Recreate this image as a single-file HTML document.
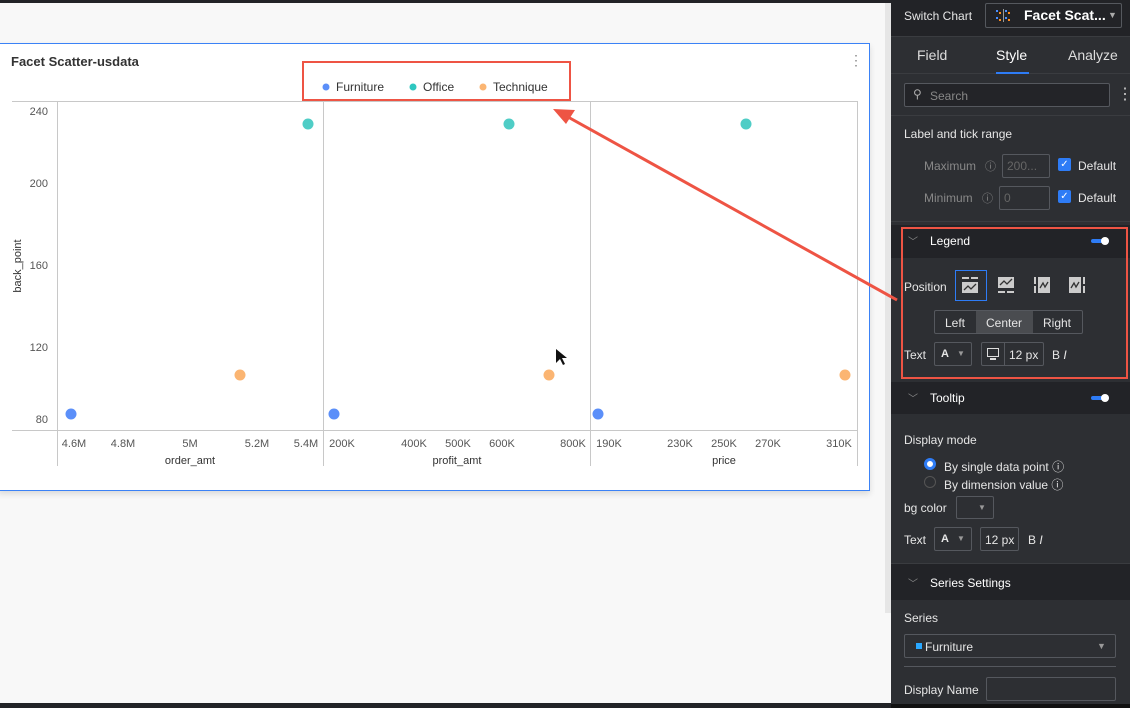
<!DOCTYPE html>
<html><head><meta charset="utf-8"><style>
*{box-sizing:border-box;margin:0;padding:0}
body{width:1130px;height:708px;overflow:hidden;background:#f8f8f8;font-family:"Liberation Sans",sans-serif;position:relative}
.a{position:absolute}
.p{color:#e6e6e6;font-size:12px}
.box{position:absolute;border:1px solid #55585e;border-radius:2px}
.sec{position:absolute;left:891px;width:239px;background:#222327}
</style></head><body>
<div class="a" style="left:0;top:0;width:1130px;height:3px;background:#222327"></div>
<div class="a" style="left:0;top:703px;width:891px;height:5px;background:#222327"></div>
<div class="a" style="left:885px;top:3px;width:6px;height:610px;background:#e6e6e6"></div>
<div class="a" style="left:-2px;top:43px;width:872px;height:448px;background:#fff;border:1px solid #3b82f6;box-shadow:0 3px 6px rgba(0,0,0,.12)"></div>
<div class="a" style="left:11px;top:54px;font-size:13px;font-weight:bold;color:#333">Facet Scatter-usdata</div>
<div class="a" style="left:849px;top:52px;font-size:14px;color:#888">⋮</div>
<svg class="a" style="left:0;top:0" width="890" height="500" font-family="Liberation Sans, sans-serif">
<g stroke="#c8c8c8" stroke-width="1">
<line x1="12" y1="101.5" x2="858" y2="101.5"/><line x1="12" y1="430.5" x2="858" y2="430.5"/>
<line x1="57.5" y1="101" x2="57.5" y2="466"/><line x1="323.5" y1="101" x2="323.5" y2="466"/>
<line x1="590.5" y1="101" x2="590.5" y2="466"/><line x1="857.5" y1="101" x2="857.5" y2="466"/>
</g>
<g font-size="11" fill="#555" text-anchor="end">
<text x="48" y="115">240</text><text x="48" y="187">200</text><text x="48" y="269">160</text><text x="48" y="351">120</text><text x="48" y="423">80</text>
</g>
<text transform="translate(21,266) rotate(-90)" font-size="11" fill="#333" text-anchor="middle">back_point</text>
<g font-size="11" fill="#555" text-anchor="middle">
<text x="74" y="447">4.6M</text><text x="123" y="447">4.8M</text><text x="190" y="447">5M</text><text x="257" y="447">5.2M</text><text x="306" y="447">5.4M</text>
<text x="342" y="447">200K</text><text x="414" y="447">400K</text><text x="458" y="447">500K</text><text x="502" y="447">600K</text><text x="573" y="447">800K</text>
<text x="609" y="447">190K</text><text x="680" y="447">230K</text><text x="724" y="447">250K</text><text x="768" y="447">270K</text><text x="839" y="447">310K</text>
</g>
<g font-size="11" fill="#333" text-anchor="middle"><text x="190" y="464">order_amt</text><text x="457" y="464">profit_amt</text><text x="724" y="464">price</text></g>
<g fill="#4fcdc6"><circle cx="308" cy="124" r="5.5"/><circle cx="509" cy="124" r="5.5"/><circle cx="746" cy="124" r="5.5"/></g>
<g fill="#fbb572"><circle cx="240" cy="375" r="5.5"/><circle cx="549" cy="375" r="5.5"/><circle cx="845" cy="375" r="5.5"/></g>
<g fill="#5b8ff9"><circle cx="71" cy="414" r="5.5"/><circle cx="334" cy="414" r="5.5"/><circle cx="598" cy="414" r="5.5"/></g>
<g font-size="12" fill="#333">
<circle cx="326" cy="87" r="3.5" fill="#5b8ff9"/><text x="336" y="91">Furniture</text>
<circle cx="413" cy="87" r="3.5" fill="#2ec7c0"/><text x="423" y="91">Office</text>
<circle cx="483" cy="87" r="3.5" fill="#fbb572"/><text x="493" y="91">Technique</text>
</g>
<rect x="303" y="62" width="267" height="38" fill="none" stroke="#ee5444" stroke-width="2"/>
<path d="M556 349 l0 14 l4 -4 l3 6 l2 -1 l-3 -6 l5 0 z" fill="#111"/>
</svg>
<div class="a" style="left:891px;top:0;width:239px;height:708px;background:#2d2f33"></div>
<div class="sec" style="top:0;height:37px;border-bottom:1px solid #3a3c40"></div>
<div class="a p" style="left:904px;top:9px">Switch Chart</div>
<div class="box" style="left:985px;top:3px;width:137px;height:25px"></div>
<svg class="a" style="left:996px;top:9px" width="16" height="13"><g fill="#4a8cff"><rect x="0" y="1" width="2" height="2"/><rect x="0" y="8" width="2" height="2"/><rect x="9" y="1" width="2" height="2"/><rect x="9" y="8" width="2" height="2"/></g><g fill="#ff8a1f"><rect x="3" y="3" width="2" height="2"/><rect x="12" y="3" width="2" height="2"/><rect x="3" y="10" width="2" height="2"/><rect x="12" y="10" width="2" height="2"/></g><line x1="7.5" y1="0" x2="7.5" y2="13" stroke="#999"/></svg>
<div class="a" style="left:1024px;top:7px;font-size:14px;color:#fff;font-weight:bold">Facet Scat...</div>
<div class="a" style="left:1108px;top:10px;font-size:9px;color:#aaa">▼</div>
<div class="sec" style="top:37px;height:37px;background:#2d2f33;border-bottom:1px solid #3a3c40"></div>
<div class="a" style="left:917px;top:47px;font-size:14px;color:#ddd">Field</div>
<div class="a" style="left:996px;top:47px;font-size:14px;color:#fff">Style</div>
<div class="a" style="left:996px;top:72px;width:33px;height:2px;background:#2e7cf6"></div>
<div class="a" style="left:1068px;top:47px;font-size:14px;color:#ddd">Analyze</div>
<div class="box" style="left:904px;top:83px;width:206px;height:24px;background:#232428"></div>
<div class="a" style="left:913px;top:87px;font-size:12px;color:#aaa">⚲</div>
<div class="a" style="left:930px;top:89px;font-size:12px;color:#888">Search</div>
<div class="a" style="left:1117px;top:84px;font-size:16px;color:#ccc">⋮</div>
<div class="a" style="left:891px;top:115px;width:239px;height:1px;background:#3a3c40"></div>
<div class="a p" style="left:904px;top:127px">Label and tick range</div>
<div class="a" style="left:924px;top:159px;font-size:12px;color:#888">Maximum</div>
<div class="a" style="left:985px;top:158px;font-size:11px;color:#888">ⓘ</div>
<div class="box" style="left:1002px;top:154px;width:48px;height:24px;color:#666;font-size:12px;padding:4px">200...</div>
<div class="a" style="left:1058px;top:158px;width:13px;height:13px;background:#2e7cf6;border-radius:2px;color:#fff;font-size:10px;text-align:center;line-height:13px">✓</div>
<div class="a p" style="left:1078px;top:159px">Default</div>
<div class="a" style="left:924px;top:191px;font-size:12px;color:#888">Minimum</div>
<div class="a" style="left:982px;top:190px;font-size:11px;color:#888">ⓘ</div>
<div class="box" style="left:999px;top:186px;width:51px;height:24px;color:#666;font-size:12px;padding:4px">0</div>
<div class="a" style="left:1058px;top:190px;width:13px;height:13px;background:#2e7cf6;border-radius:2px;color:#fff;font-size:10px;text-align:center;line-height:13px">✓</div>
<div class="a p" style="left:1078px;top:191px">Default</div>
<div class="a" style="left:891px;top:221px;width:239px;height:1px;background:#3a3c40"></div>
<div class="sec" style="top:225px;height:33px"></div>
<div class="a" style="left:908px;top:233px;font-size:10px;color:#888">﹀</div>
<div class="a p" style="left:930px;top:234px;color:#fff">Legend</div>
<div class="a" style="left:1091px;top:239px;width:18px;height:4px;background:#2e7cf6;border-radius:2px"></div>
<div class="a" style="left:1101px;top:237px;width:8px;height:8px;background:#fff;border-radius:50%"></div>
<div class="a p" style="left:904px;top:280px">Position</div>
<div class="a" style="left:955px;top:270px;width:32px;height:31px;border:1px solid #2e7cf6"></div>
<svg class="a" style="left:962px;top:277px" width="18" height="18"><g fill="#ccc"><rect x="0" y="0" width="7" height="2"/><rect x="9" y="0" width="7" height="2"/><rect x="0" y="5" width="16" height="11"/></g><path d="M2 13 L6 9 L9 12 L14 7" stroke="#333" stroke-width="1.3" fill="none"/></svg>
<svg class="a" style="left:998px;top:277px" width="18" height="18"><g fill="#ccc"><rect x="0" y="0" width="16" height="11"/><rect x="0" y="14" width="7" height="2"/><rect x="9" y="14" width="7" height="2"/></g><path d="M2 8 L6 4 L9 7 L14 2" stroke="#333" stroke-width="1.3" fill="none"/></svg>
<svg class="a" style="left:1034px;top:277px" width="18" height="18"><g fill="#ccc"><rect x="0" y="0" width="2" height="7"/><rect x="0" y="9" width="2" height="7"/><rect x="4" y="0" width="12" height="16"/></g><path d="M6 11 L9 6 L11 10 L14 5" stroke="#333" stroke-width="1.3" fill="none"/></svg>
<svg class="a" style="left:1069px;top:277px" width="18" height="18"><g fill="#ccc"><rect x="0" y="0" width="12" height="16"/><rect x="14" y="0" width="2" height="7"/><rect x="14" y="9" width="2" height="7"/></g><path d="M2 11 L5 6 L7 10 L10 5" stroke="#333" stroke-width="1.3" fill="none"/></svg>
<div class="box" style="left:934px;top:310px;width:149px;height:24px"></div>
<div class="a" style="left:976px;top:311px;width:57px;height:22px;background:#4a4c50"></div>
<div class="a p" style="left:945px;top:316px">Left</div>
<div class="a p" style="left:986px;top:316px">Center</div>
<div class="a p" style="left:1043px;top:316px">Right</div>
<div class="a p" style="left:904px;top:348px">Text</div>
<div class="box" style="left:934px;top:342px;width:38px;height:24px"></div>
<div class="a p" style="left:941px;top:348px;font-weight:bold;font-size:11px">A</div>
<div class="a" style="left:957px;top:349px;font-size:8px;color:#999">▼</div>
<div class="box" style="left:981px;top:342px;width:63px;height:24px"></div>
<div class="a" style="left:1004px;top:343px;width:1px;height:22px;background:#55585e"></div>
<div class="a" style="left:987px;top:348px;width:12px;height:9px;border:1.5px solid #ddd"></div>
<div class="a" style="left:990px;top:358px;width:6px;height:1.5px;background:#ddd"></div>
<div class="a p" style="left:1009px;top:348px">12 px</div>
<div class="a p" style="left:1052px;top:348px">B <i>I</i></div>
<div class="a" style="left:901px;top:227px;width:227px;height:152px;border:2px solid #ee5444"></div>
<div class="sec" style="top:382px;height:32px"></div>
<div class="a" style="left:908px;top:390px;font-size:10px;color:#888">﹀</div>
<div class="a p" style="left:930px;top:391px;color:#fff">Tooltip</div>
<div class="a" style="left:1091px;top:396px;width:18px;height:4px;background:#2e7cf6;border-radius:2px"></div>
<div class="a" style="left:1101px;top:394px;width:8px;height:8px;background:#fff;border-radius:50%"></div>
<div class="a p" style="left:904px;top:433px">Display mode</div>
<div class="a" style="left:924px;top:458px;width:12px;height:12px;border-radius:50%;border:3px solid #2e7cf6;background:#fff"></div>
<div class="a p" style="left:944px;top:458px">By single data point ⓘ</div>
<div class="a" style="left:924px;top:476px;width:12px;height:12px;border-radius:50%;border:1px solid #555"></div>
<div class="a p" style="left:944px;top:476px">By dimension value ⓘ</div>
<div class="a p" style="left:904px;top:501px">bg color</div>
<div class="box" style="left:956px;top:496px;width:38px;height:23px"></div>
<div class="a" style="left:978px;top:503px;font-size:8px;color:#999">▼</div>
<div class="a p" style="left:904px;top:533px">Text</div>
<div class="box" style="left:934px;top:527px;width:38px;height:24px"></div>
<div class="a p" style="left:941px;top:533px;font-weight:bold;font-size:11px">A</div>
<div class="a" style="left:957px;top:534px;font-size:8px;color:#999">▼</div>
<div class="box" style="left:980px;top:527px;width:39px;height:24px"></div>
<div class="a p" style="left:985px;top:533px">12 px</div>
<div class="a p" style="left:1028px;top:533px">B <i>I</i></div>
<div class="a" style="left:891px;top:563px;width:239px;height:1px;background:#3a3c40"></div>
<div class="sec" style="top:564px;height:36px"></div>
<div class="a" style="left:908px;top:575px;font-size:10px;color:#888">﹀</div>
<div class="a p" style="left:930px;top:576px;color:#fff">Series Settings</div>
<div class="a p" style="left:904px;top:611px">Series</div>
<div class="box" style="left:904px;top:634px;width:212px;height:24px"></div>
<div class="a" style="left:916px;top:643px;width:6px;height:6px;background:#29a8ff"></div>
<div class="a p" style="left:925px;top:640px">Furniture</div>
<div class="a" style="left:1097px;top:641px;font-size:9px;color:#999">▼</div>
<div class="a" style="left:904px;top:666px;width:212px;height:1px;background:#55585e"></div>
<div class="a p" style="left:904px;top:683px">Display Name</div>
<div class="box" style="left:986px;top:677px;width:130px;height:24px"></div>
<div class="a" style="left:891px;top:704px;width:239px;height:4px;background:#111"></div>
<svg class="a" style="left:0;top:0" width="1130" height="708">
<line x1="897" y1="300" x2="568" y2="117" stroke="#ee5444" stroke-width="3"/>
<polygon points="553,109 575,110 566,124" fill="#ee5444"/>
</svg>
</body></html>
